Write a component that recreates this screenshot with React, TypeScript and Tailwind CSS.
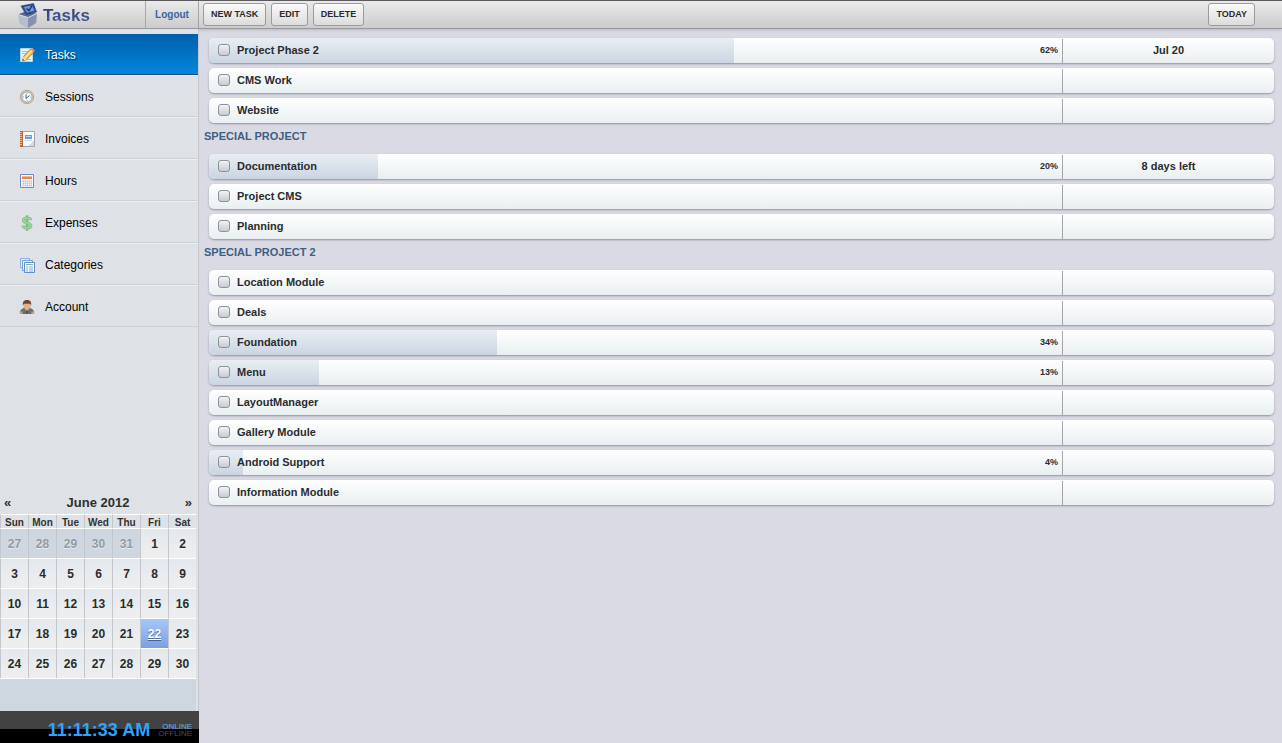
import type { ReactNode } from 'react';

type Task = { name: string; progress?: number; due?: string };
type Group = { title?: string; tasks: Task[] };

const groups: Group[] = [
  {
    tasks: [
      { name: 'Project Phase 2', progress: 62, due: 'Jul 20' },
      { name: 'CMS Work' },
      { name: 'Website' },
    ],
  },
  {
    title: 'SPECIAL PROJECT',
    tasks: [
      { name: 'Documentation', progress: 20, due: '8 days left' },
      { name: 'Project CMS' },
      { name: 'Planning' },
    ],
  },
  {
    title: 'SPECIAL PROJECT 2',
    tasks: [
      { name: 'Location Module' },
      { name: 'Deals' },
      { name: 'Foundation', progress: 34 },
      { name: 'Menu', progress: 13 },
      { name: 'LayoutManager' },
      { name: 'Gallery Module' },
      { name: 'Android Support', progress: 4 },
      { name: 'Information Module' },
    ],
  },
];

const weekdays = ['Sun', 'Mon', 'Tue', 'Wed', 'Thu', 'Fri', 'Sat'];
const weeks = [
  [27, 28, 29, 30, 31, 1, 2],
  [3, 4, 5, 6, 7, 8, 9],
  [10, 11, 12, 13, 14, 15, 16],
  [17, 18, 19, 20, 21, 22, 23],
  [24, 25, 26, 27, 28, 29, 30],
];

function Icon({ children }: { children: ReactNode }) {
  return (
    <svg viewBox="0 0 16 16" className="size-4 shrink-0" aria-hidden="true">
      {children}
    </svg>
  );
}

function LogoIcon() {
  return (
    <svg viewBox="0 0 22 26" className="h-[26px] w-[22px] shrink-0" aria-hidden="true">
      <path d="M1 12.500 7 10l13 1.500-9 4z" fill="#5c6885" />
      <path d="M1 12.500l10 3V26L2.500 21.500z" fill="#b6bdcd" />
      <path d="M11 15.500l9-4-.8 9.500L11 26z" fill="#8792ae" />
      <path d="M1 12.500l10 3 9-4" fill="none" stroke="#dfe3ec" strokeWidth=".9" />
      <path d="M4 4l12.500-2.500L19.500 10 9 12.500z" fill="#2a529b" stroke="#1f3d7c" strokeWidth=".6" />
      <path d="M7 5l8-1.600 2.300 5.400-7.300 1.700z" fill="#7c9dd3" />
      <path d="M9.500 6.500l2.500 2.200 3-5.200" fill="none" stroke="#16306a" strokeWidth="1.500" />
    </svg>
  );
}

function TasksIcon() {
  return (
    <Icon>
      <path d="M1.500 1.500h12v13h-12z" fill="#e8f3fb" stroke="#b4d4ec" />
      <path d="M3 4.500h6M3 6.500h4M3 12.500h9" stroke="#98c4e6" />
      <path d="M4.500 9.500 11.500 2l3.500 3-7.500 7.800-4 1z" fill="#f2c04e" stroke="#a8742b" strokeWidth=".8" />
      <path d="M11.500 2 13 .8l3 2.900L14.800 5z" fill="#d98f83" />
      <path d="M4.500 9.500l3 3.200-4 1z" fill="#f5e3c2" />
      <path d="M3.500 13.800l.5-1.800 1.300 1.300z" fill="#333" />
      <path d="M6.300 10.500l6.500-6.800" stroke="#ffe9a0" strokeWidth="1.200" />
    </Icon>
  );
}

function ClockIcon() {
  return (
    <Icon>
      <circle cx="8" cy="8" r="6.700" fill="#dccba3" stroke="#b39d70" strokeWidth=".8" />
      <circle cx="8" cy="8" r="5.100" fill="#f3f8fc" stroke="#8aa3bf" strokeWidth=".9" />
      <path d="M8 4v.8M8 11.200v.8M4 8h.8M11.200 8h.8" stroke="#829bb4" />
      <path d="M7 5.500v4l3.500-3" fill="none" stroke="#4a6888" strokeWidth="1" />
    </Icon>
  );
}

function InvoiceIcon() {
  return (
    <Icon>
      <path d="M3.500.5h12v15h-12z" fill="#f8fafc" stroke="#a0a5ac" />
      <path d="M1 0h3v16H1z" fill="#b8663c" />
      <path d="M1 1.500h2M1 3.500h2M1 5.500h2M1 7.500h2M1 9.500h2M1 11.500h2M1 13.500h2" stroke="#f0d1a5" strokeWidth=".8" />
      <path d="M6 4h7v4H6z" fill="#6f9ad8" />
      <path d="M7 5.500h5" stroke="#dbe8fa" strokeWidth=".8" />
      <path d="M6 9.500h7" stroke="#b7d0f2" strokeWidth=".8" />
      <path d="M10 15l5-5v5z" fill="#dce0e5" stroke="#b4b9c0" strokeWidth=".5" />
    </Icon>
  );
}

function CalendarIcon() {
  return (
    <Icon>
      <path d="M1.500 1.500h13v13h-13z" fill="#f2f7fe" stroke="#648fc8" />
      <path d="M3 3h10v3H3z" fill="#f08748" />
      <path d="M3 3.500h10" stroke="#fbb78c" />
      <path d="M3 8.500h10M3 10.500h10M3 12.500h10M4.500 7v6.500M6.500 7v6.500M8.500 7v6.500M10.500 7v6.500M12.500 7v6.500" stroke="#b3cae8" strokeWidth=".7" />
    </Icon>
  );
}

function DollarIcon() {
  return (
    <Icon>
      <path d="M8 .3v15.400" stroke="#7cbd82" strokeWidth="2.600" />
      <path d="M12 5.200C11.500 3.500 10 3 8 3 5.500 3 4.300 4 4.300 5.500 4.300 9 12 7 12 10.500c0 1.600-1.500 2.500-4 2.500-2.400 0-4-.8-4.200-2.600" fill="none" stroke="#7cbd82" strokeWidth="2.800" />
      <path d="M12 5.200C11.500 3.500 10 3 8 3 5.500 3 4.300 4 4.300 5.500 4.300 9 12 7 12 10.500c0 1.600-1.500 2.500-4 2.500-2.400 0-4-.8-4.200-2.600" fill="none" stroke="#9ed3a1" strokeWidth="1.600" />
    </Icon>
  );
}

function CategoriesIcon() {
  return (
    <Icon>
      <path d="M1.500 1.500h9v9h-9z" fill="#dcebfb" stroke="#8db2e0" />
      <path d="M3.500 3.500h10v10h-10z" fill="#e4f0fc" stroke="#7da3d6" />
      <path d="M5.500 5.500h10v10h-10z" fill="#f4f9ff" stroke="#5f8ccb" />
      <path d="M7 7.500h7" stroke="#7fba83" />
      <path d="M7 10h2M10 10h4M7 12h2M10 12h4M7 14h2M10 14h4" stroke="#87aadb" />
    </Icon>
  );
}

function AccountIcon() {
  return (
    <Icon>
      <path d="M1.300 14.500c-.3-2.500 1-4.500 3.700-5h6c2.700.5 4 2.500 3.700 5z" fill="#6b6f76" stroke="#4d5157" strokeWidth=".7" />
      <path d="M6 9.500h4L8 14z" fill="#d9dce2" />
      <path d="M7.500 10.500h1l.5 3-1 1-1-1z" fill="#40454f" />
      <path d="M1.200 12.500h2.300V15H1.200zM12.500 12.500h2.300V15h-2.300z" fill="#d6a071" />
      <path d="M4.500 4h7v3.500C11.500 9 10 10.300 8 10.300S4.500 9 4.500 7.500z" fill="#e5b083" />
      <path d="M3.800 6.500C3.500 2.500 5 1 8 1s4.500 1.500 4.200 5.500L11 4.800H5z" fill="#70462a" />
    </Icon>
  );
}

const navItems = [
  { label: 'Tasks', icon: <TasksIcon /> },
  { label: 'Sessions', icon: <ClockIcon /> },
  { label: 'Invoices', icon: <InvoiceIcon /> },
  { label: 'Hours', icon: <CalendarIcon /> },
  { label: 'Expenses', icon: <DollarIcon /> },
  { label: 'Categories', icon: <CategoriesIcon /> },
  { label: 'Account', icon: <AccountIcon /> },
];

function ToolButton({ children }: { children: ReactNode }) {
  return (
    <button
      type="button"
      className="h-[23px] rounded-[3px] border border-[#9b9b9e] bg-linear-to-b from-[#fafafa] to-[#dcdcdc] px-[7px] text-[9px] font-bold whitespace-nowrap text-[#2b2b2b]"
    >
      {children}
    </button>
  );
}

function TaskRow({ task }: { task: Task }) {
  return (
    <li className="mb-[5px] flex h-[25px] overflow-hidden rounded-[5px] bg-linear-to-b from-white to-[#e9eff1] shadow-[0_1px_2px_#8f929c]">
      <div className="relative flex min-w-0 flex-1 items-center">
        {task.progress !== undefined && (
          <div className="absolute inset-y-0 right-[7px] left-0">
            <div
              className="h-full bg-linear-to-b from-[#e9eef3] to-[#cbd5e1]"
              style={{ width: `${task.progress}%` }}
            />
          </div>
        )}
        <label className="relative flex flex-1 items-center gap-[7px] pb-0.5 pl-[9px] text-[11px] leading-4 font-bold text-[#2a2c2e]">
          <input
            type="checkbox"
            className="size-3 appearance-none rounded-[3px] border border-[#8d929b] bg-linear-to-b from-[#f1f2f4] to-[#c8ccd2] checked:bg-[#6f9ad8]"
          />
          {task.name}
        </label>
        {task.progress !== undefined && (
          <span className="relative pr-1 text-[9px] font-bold text-[#2a2c2e]">{task.progress}%</span>
        )}
      </div>
      <div className="mt-px flex w-[212px] shrink-0 items-center justify-center border-l border-[#a3a7ab] pb-0.5 text-[11px] font-bold text-[#2a2c2e]">
        {task.due}
      </div>
    </li>
  );
}

function dayClass(day: number, outside: boolean) {
  if (outside) return 'bg-[#ced7e0] text-[#959a9f] [text-shadow:0_1px_0_#e8edf2]';
  if (day === 22) return 'bg-linear-to-b from-[#a6c8fb] to-[#7ba0de] text-white underline [text-shadow:0_1px_1px_#4a6288]';
  return 'bg-linear-to-b from-[#e4e9ee] to-[#eeeeee] text-[#2b2b2b]';
}

function MonthCalendar() {
  return (
    <section className="mt-auto mr-[3px]" aria-label="Calendar">
      <div className="flex h-[25px] items-center justify-between px-1 pt-0.5 text-[13px] font-bold text-[#2f2f2f]">
        <button type="button" aria-label="Previous month">«</button>
        <h2>June 2012</h2>
        <button type="button" aria-label="Next month">»</button>
      </div>
      <table className="w-full table-fixed border-separate border-spacing-0 text-center font-bold">
        <thead>
          <tr>
            {weekdays.map((d) => (
              <th key={d} className="h-[14px] border-t border-l border-t-white border-l-[#c3c7cc] p-0 pt-0.5 text-[10px] leading-[11px] text-[#333]">
                {d}
              </th>
            ))}
          </tr>
        </thead>
        <tbody className="text-[12px]">
          {weeks.map((week, w) => (
            <tr key={week[0]}>
              {week.map((day) => (
                <td
                  key={day}
                  className={`h-[30px] border-t border-l border-t-white border-l-[#c3c7cc] p-0 ${dayClass(day, w === 0 && day > 20)}`}
                >
                  {day}
                </td>
              ))}
            </tr>
          ))}
        </tbody>
      </table>
      <div className="h-[33px] border-t border-white bg-[#ced7e0]" />
    </section>
  );
}

export default function App() {
  return (
    <div className="flex min-h-screen flex-col bg-[#dadae4] font-['Liberation_Sans',Arial,sans-serif]">
      <header className="flex h-[29px] border-t border-b border-t-[#5c595e] border-b-[#98989a] bg-linear-to-b from-[#eaeaea] to-[#cccccc] shadow-[0_1px_3px_#b5b5bf]">
        <div className="flex w-[199px] shrink-0 border-r border-[#a4a4a6]">
          <div className="flex flex-1 items-center gap-1 pl-[17px]">
            <LogoIcon />
            <h1 className="bg-linear-to-b from-[#26306a] to-[#5468a0] bg-clip-text pt-0.5 text-[17px] font-bold text-transparent">
              Tasks
            </h1>
          </div>
          <a href="#logout" className="flex w-[53px] items-center justify-center border-l border-[#a9a9ab] text-[10px] font-bold text-[#3766a0]">
            Logout
          </a>
        </div>
        <div className="flex flex-1 items-center gap-[5px] pr-[27px] pl-1">
          <ToolButton>NEW TASK</ToolButton>
          <ToolButton>EDIT</ToolButton>
          <ToolButton>DELETE</ToolButton>
          <div className="ml-auto flex">
            <ToolButton>TODAY</ToolButton>
          </div>
        </div>
      </header>

      <div className="flex flex-1">
        <aside className="flex w-[199px] shrink-0 flex-col bg-[#dee2e7] pt-[5px] shadow-[inset_-1px_0_0_#c6c7cd]">
          <nav className="mr-px flex flex-col">
            {navItems.map((item, i) => (
              <a
                key={item.label}
                href={`#${item.label.toLowerCase()}`}
                aria-current={i === 0 ? 'page' : undefined}
                className={
                  i === 0
                    ? 'flex h-[41px] items-center gap-[10px] border-b border-[#174b77] bg-linear-to-b from-[#0060ac] to-[#0486dc] pt-px pl-[19px] text-[12px] text-white [text-shadow:1px_1px_1px_#00305c]'
                    : 'flex h-[42px] items-center gap-[10px] border-t border-b border-t-[#eceff2] border-b-[#cdd1d6] pt-px pl-[19px] text-[12px] text-black'
                }
              >
                {item.icon}
                {item.label}
              </a>
            ))}
          </nav>
          <MonthCalendar />
          <footer className="flex h-8 items-end justify-end gap-2 bg-linear-to-b from-[#424242] from-55% to-black to-55% pr-[7px]">
            <time className="text-[18px] leading-[26px] font-bold text-[#2ea3fb]">11:11:33 AM</time>
            <div className="pb-1.5 text-right text-[8px] leading-[7px]">
              <div className="text-[#5fb2f5]">ONLINE</div>
              <div className="text-[#3c5064]">OFFLINE</div>
            </div>
          </footer>
        </aside>

        <main className="min-w-0 flex-1 pt-[9px] pr-2 pl-[5px]">
          {groups.map((group) => (
            <section key={group.title ?? 'general'}>
              {group.title && (
                <h2 className="mb-[10px] text-[11px] leading-4 font-bold text-[#3d5f82]">{group.title}</h2>
              )}
              <ul className="pl-[5px]">
                {group.tasks.map((task) => (
                  <TaskRow key={task.name} task={task} />
                ))}
              </ul>
            </section>
          ))}
        </main>
      </div>
    </div>
  );
}
